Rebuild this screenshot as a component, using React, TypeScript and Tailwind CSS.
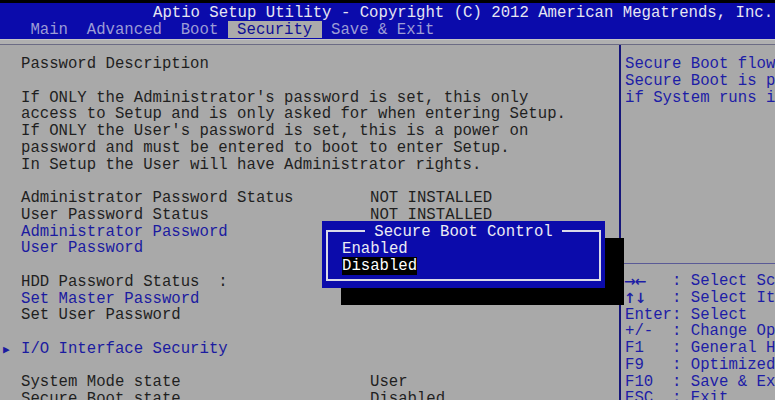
import React from "react";

const BLUE = "bg-[#0b0bab]";

type Row = { label?: string; value?: string; blue?: boolean; arrow?: boolean };

const leftRows: Row[] = [
  { label: "Password Description" },
  {},
  { label: "If ONLY the Administrator's password is set, this only" },
  { label: "access to Setup and is only asked for when entering Setup." },
  { label: "If ONLY the User's password is set, this is a power on" },
  { label: "password and must be entered to boot to enter Setup." },
  { label: "In Setup the User will have Administrator rights." },
  {},
  { label: "Administrator Password Status", value: "NOT INSTALLED" },
  { label: "User Password Status", value: "NOT INSTALLED" },
  { label: "Administrator Password", blue: true },
  { label: "User Password", blue: true },
  {},
  { label: "HDD Password Status  :" },
  { label: "Set Master Password", blue: true },
  { label: "Set User Password" },
  {},
  { label: "I/O Interface Security", blue: true, arrow: true },
  {},
  { label: "System Mode state", value: "User" },
  { label: "Secure Boot state", value: "Disabled" },
];

const helpRows = [
  ["→←", "Select Screen"],
  ["↑↓", "Select Item"],
  ["Enter", "Select"],
  ["+/-", "Change Opt."],
  ["F1", "General Help"],
  ["F9", "Optimized Defaults"],
  ["F10", "Save & Exit"],
  ["ESC", "Exit"],
];

const tabs = ["Main", "Advanced", "Boot", "Security", "Save & Exit"];

export default function App() {
  return (
    <div
      className="relative w-[775px] h-[400px] overflow-hidden bg-[#a9a9a9] text-[15.67px] whitespace-pre"
      style={{ fontFamily: '"Liberation Mono", "DejaVu Sans Mono", monospace' }}
    >
      {/* Header */}
      <div className="h-[3px] bg-black" />
      <div className={`${BLUE} pt-[1px] pb-[1px]`}>
        <div className="h-[17px] leading-[18px] pl-[153px] text-[#e6e6f2]">
          Aptio Setup Utility - Copyright (C) 2012 American Megatrends, Inc.
        </div>
        <div className="flex h-[17px] leading-[18px] pl-[21px]">
          {tabs.map((t) => (
            <div
              key={t}
              className={`px-[9.4px] ${
                t === "Security" ? "bg-[#ababab] text-[#0e0e96]" : "text-[#9c9cd6]"
              }`}
            >
              {t}
            </div>
          ))}
        </div>
      </div>
      <div className="h-[5px] bg-[#b0b0b0] border-t border-[#c4c4c4]" />

      {/* Body */}
      <div className="flex border-t border-[#6c6c84] h-[356px]">
        {/* Left column */}
        <div className="w-[619px] shrink-0 pl-[21px] pt-[11px] text-[#1f1f1f]">
          {leftRows.map((r, i) => (
            <div key={i} className="flex h-[16.75px] leading-[16.75px]">
              <div className={`w-[349px] shrink-0 ${r.blue ? "text-[#1b1ba0]" : ""}`}>
                {r.arrow && (
                  <span className="inline-block w-[18px] -ml-[18px] text-[#1b1ba0] text-[11px]">
                    ▶
                  </span>
                )}
                {r.label ?? ""}
              </div>
              {r.value && <div>{r.value}</div>}
            </div>
          ))}
        </div>

        {/* Right column */}
        <div className="flex-1 min-w-0 overflow-hidden flex flex-col border-l-2 border-[#16167a] text-[#1d1da6]">
          <div className="h-[218px] shrink-0 pl-[4px] pt-[11px]">
            <div className="h-[16.75px] leading-[16.75px]">Secure Boot flow control.</div>
            <div className="h-[16.75px] leading-[16.75px]">Secure Boot is possible only</div>
            <div className="h-[16.75px] leading-[16.75px]">if System runs in User mode.</div>
          </div>
          <div className="border-t border-[#5a5a96] pl-[3px] pt-[9px]">
            {helpRows.map(([k, v], i) => (
              <div key={k} className="flex h-[16.75px] leading-[16.75px]">
                <div
                  className={`w-[48px] shrink-0 ${
                    i < 2 ? "font-bold text-[14px] tracking-[-1px]" : "pl-[1px]"
                  }`}
                  style={i < 2 ? { fontFamily: '"DejaVu Sans", sans-serif' } : undefined}
                >
                  {k}
                </div>
                <div>: {v}</div>
              </div>
            ))}
          </div>
        </div>
      </div>

      {/* Popup */}
      <div
        className={`absolute left-[322px] top-[221px] w-[283px] h-[67px] ${BLUE} px-[4px] pt-[9px] pb-[7px] shadow-[19px_17px_0_0_#000] text-[#ececf4]`}
      >
        <div className="h-full border-2 border-[#dadae8] pl-[14px] pt-[1px]">
          <div className="-mt-[10px] -ml-[14px] h-[18px] leading-[18px] text-center">
            <span className={`${BLUE} px-[9.4px]`}>Secure Boot Control</span>
          </div>
          <div className="h-[16.8px] leading-[16.8px]">Enabled</div>
          <div className="h-[16.8px] leading-[16.8px]">
            <span className="bg-black text-white">Disabled</span>
          </div>
        </div>
      </div>
    </div>
  );
}
